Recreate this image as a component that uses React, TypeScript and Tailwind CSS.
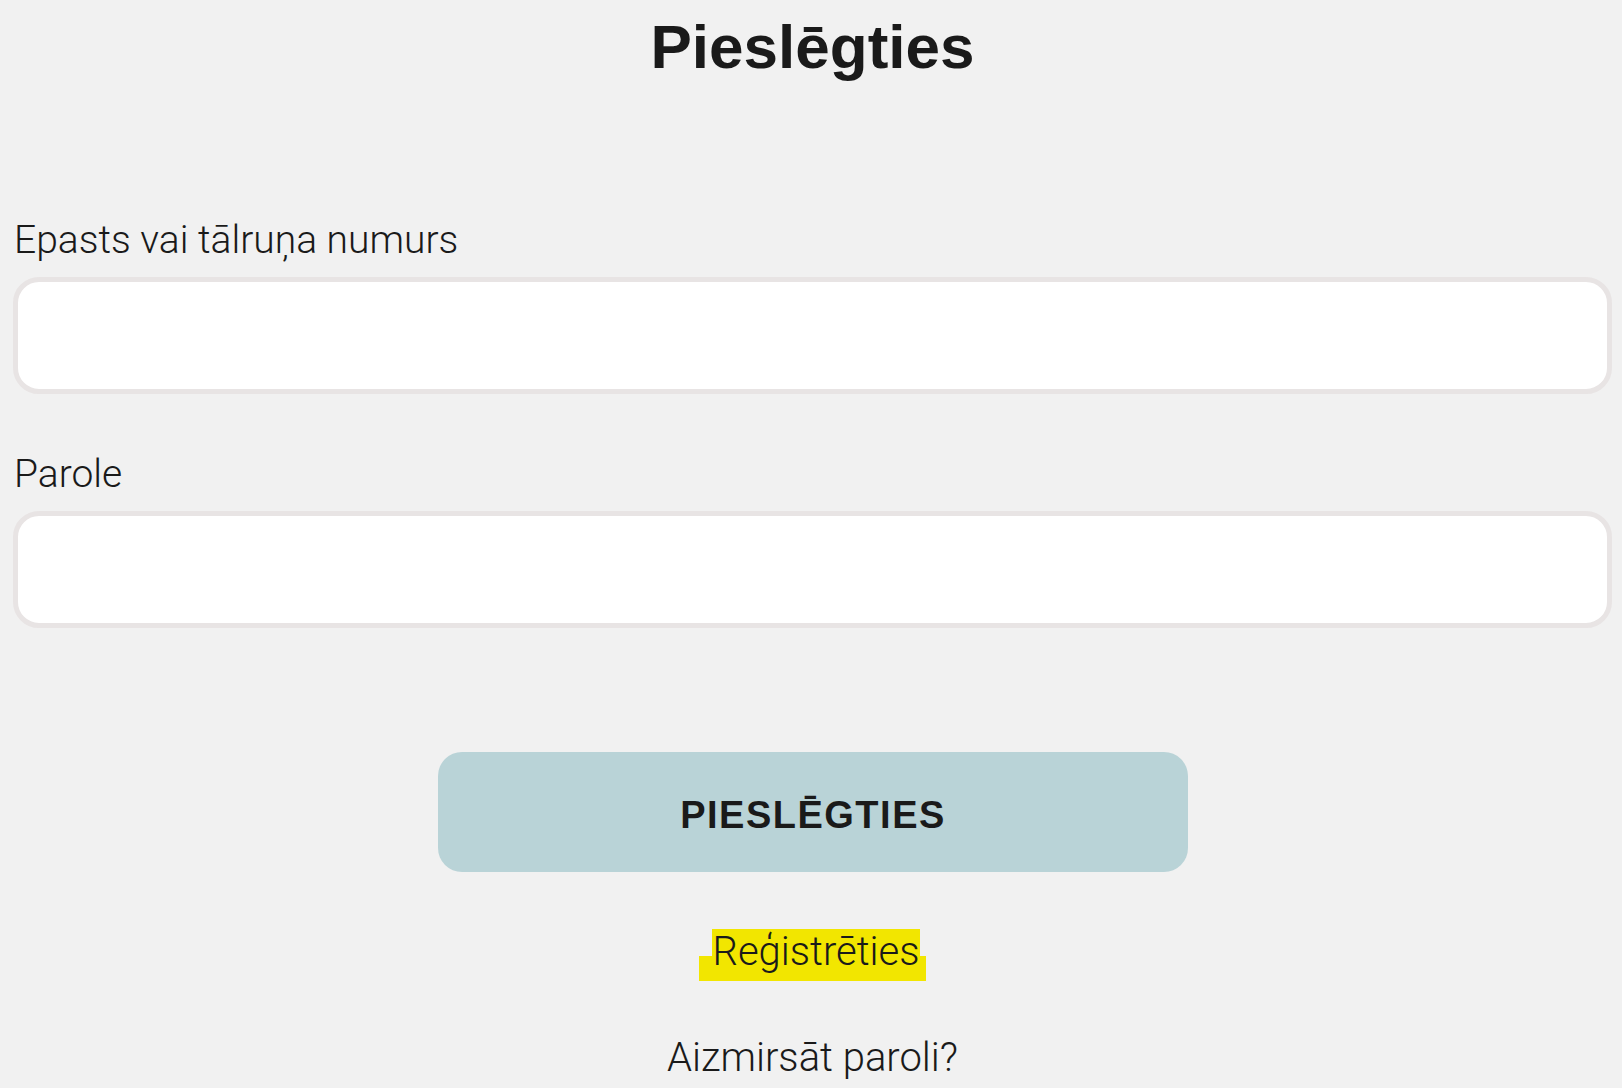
import React from 'react';

const FONT = "font-['Roboto','Liberation_Sans',sans-serif] font-light text-[#1a1a1a]";
const LABEL = `${FONT} text-[40px] leading-[40px]`;

const Field: React.FC<{ label: string; type?: string; className?: string }> = ({ label, type = 'text', className }) => (
  <div className={className}>
    <label className={`block ${FONT} text-[39px] leading-[40px] mb-[17px] pt-[1px] pl-[1px]`}>{label}</label>
    <input
      type={type}
      className="block w-full h-[117px] bg-white border-[5px] border-[#e8e4e4] rounded-[26px] outline-none px-6 text-[32px]"
    />
  </div>
);

export default function App() {
  return (
    <div className="min-h-screen bg-[#f1f1f1] pl-[13px] pr-[10px] pt-[16px] pb-10">
      {/* Header */}
      <h1 className="text-center font-['Liberation_Sans',sans-serif] font-bold text-[62px] leading-[62px] text-[#1a1a1a]">
        Pieslēgties
      </h1>

      {/* Form */}
      <Field label="Epasts vai tālruņa numurs" className="mt-[141px]" />
      <Field label="Parole" type="password" className="mt-[59px]" />

      <div className="flex justify-center mt-[124px]">
        <button className="w-[750px] h-[120px] pt-[7px] rounded-[24px] bg-[#b9d3d7] font-['Liberation_Sans',sans-serif] font-bold text-[38px] tracking-[1.5px] text-[#1a1a1a] ml-[1px]">
          PIESLĒGTIES
        </button>
      </div>

      {/* Links */}
      <div className="flex justify-center mt-[57px]">
        <a
          href="#"
          className="inline-block pl-[13px] pr-[6px] bg-[linear-gradient(to_bottom,transparent_52%,#f2e600_52%)]"
        >
          <span className={`inline-block h-[52px] bg-[#f2e600] ${FONT} text-[40px] leading-[45px] pb-[7px]`}>Reģistrēties</span>
        </a>
      </div>

      <div className="flex justify-center mt-[57px]">
        <a href="#" className={LABEL}>Aizmirsāt paroli?</a>
      </div>
    </div>
  );
}
